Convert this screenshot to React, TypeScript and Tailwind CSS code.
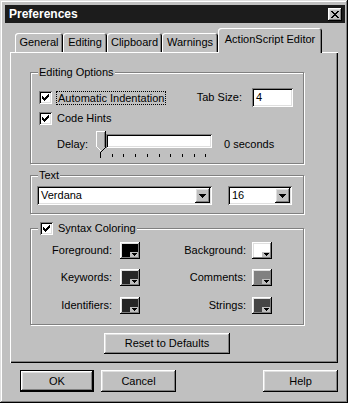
import React from "react";

const raised =
  "shadow-[inset_-1px_-1px_0_#000,inset_1px_1px_0_#fff,inset_-2px_-2px_0_#808080,inset_2px_2px_0_#dfdfdf]";
const sunken =
  "shadow-[inset_1px_1px_0_#808080,inset_-1px_-1px_0_#fff,inset_2px_2px_0_#000,inset_-2px_-2px_0_#dfdfdf]";

function CheckBox() {
  return (
    <div className={`w-[13px] h-[13px] bg-white ${sunken} flex items-center justify-center shrink-0`}>
      <svg width="7" height="7" viewBox="0 0 7 7" shapeRendering="crispEdges">
        <path d="M0 2h1v1h1v1h1v-1h1v-1h1v-1h1v-1h1v3h-1v1h-1v1h-1v1h-1v1h-1v-1h-1v-1h-1v-1h-1z" fill="#000" />
      </svg>
    </div>
  );
}

function Arrow() {
  return (
    <svg width="7" height="4" viewBox="0 0 7 4" shapeRendering="crispEdges">
      <path d="M0 0h7v1h-1v1h-1v1h-1v1h-1v-1h-1v-1h-1v-1h-1z" fill="#000" />
    </svg>
  );
}

function Select({ value, width }: { value: string; width: string }) {
  return (
    <div className={`${width} h-[19px] bg-white ${sunken} flex items-center pl-[4px] pr-[2px]`}>
      <span className="flex-1 leading-none">{value}</span>
      <div className={`w-[15px] h-[15px] bg-[#c0c0c0] ${raised} flex items-center justify-center`}>
        <Arrow />
      </div>
    </div>
  );
}

function Swatch({ color }: { color: string }) {
  return (
    <div className={`relative w-[20px] h-[17px] bg-[#c0c0c0] ${raised} shrink-0`}>
      <div className="absolute left-[2px] top-[2px] right-[2px] bottom-[2px]" style={{ background: color }} />
      <div className="absolute right-[2px] bottom-[2px] w-[8px] h-[5px] bg-[#c0c0c0] flex items-center justify-center">
        <svg width="5" height="3" viewBox="0 0 5 3" shapeRendering="crispEdges">
          <path d="M0 0h5v1h-1v1h-1v1h-1v-1h-1v-1h-1z" fill="#000" />
        </svg>
      </div>
    </div>
  );
}

function Button({ label, width, isDefault }: { label: string; width: string; isDefault?: boolean }) {
  const inner = (
    <div className={`${isDefault ? "w-full h-full" : `${width} h-[22px]`} bg-[#c0c0c0] ${raised} flex items-center justify-center`}>
      {label}
    </div>
  );
  if (isDefault) {
    return <div className={`${width} h-[22px] border border-black`}>{inner}</div>;
  }
  return inner;
}

function Tab({ label, width, active }: { label: string; width: string; active?: boolean }) {
  return (
    <div
      className={`${width} ${
        active ? "h-[25px] -mb-px relative z-10 pb-[3px]" : "h-[19px]"
      } bg-[#c0c0c0] rounded-t-[3px] shadow-[inset_1px_1px_0_#fff,inset_-1px_0_0_#000,inset_-2px_0_0_#808080] flex items-center justify-center`}
    >
      {label}
    </div>
  );
}

function Group({
  legend,
  className,
  children,
}: {
  legend: React.ReactNode;
  className: string;
  children: React.ReactNode;
}) {
  return (
    <div className={`relative w-[274px] border border-[#808080] shadow-[inset_1px_1px_0_#fff,1px_1px_0_#fff] ${className}`}>
      <div className="absolute -top-[8px] left-[7px] px-[1px] bg-[#c0c0c0] flex items-center leading-none h-[14px]">
        {legend}
      </div>
      {children}
    </div>
  );
}

export default function App() {
  const ticks = [0, 1, 2, 3, 4, 5, 6, 7, 8, 9];
  return (
    <div className="w-[350px] h-[406px] bg-white font-['Liberation_Sans',Arial,sans-serif] text-[11px] text-black">
      <div className="w-[348px] h-[403px] bg-[#c0c0c0] shadow-[inset_-1px_-1px_0_#000,inset_1px_1px_0_#dfdfdf,inset_-2px_-2px_0_#808080,inset_2px_2px_0_#fff] pt-[5px] pl-[5px] pr-[3px] flex flex-col">
        {/* Title bar */}
        <div className="h-[18px] bg-[#1c1c1c] flex items-center justify-between pl-[4px] pr-[3px]">
          <span className="text-white font-bold text-[12px] leading-none">Preferences</span>
          <div className={`w-[14px] h-[13px] bg-[#c0c0c0] ${raised} flex items-center justify-center`}>
            <svg width="8" height="7" viewBox="0 0 8 7" shapeRendering="crispEdges">
              <path d="M0 0h2v1h1v1h2v-1h1v-1h2v1h-1v1h-1v1h-1v1h1v1h1v1h1v1h-2v-1h-1v-1h-2v1h-1v1h-2v-1h1v-1h1v-1h1v-1h-1v-1h-1v-1h-1z" fill="#000" />
            </svg>
          </div>
        </div>

        {/* Tabs */}
        <div className="mt-[5px] h-[24px] ml-[10px] flex items-end">
          <Tab label="General" width="w-[48px]" />
          <Tab label="Editing" width="w-[44px]" />
          <Tab label="Clipboard" width="w-[55px]" />
          <Tab label="Warnings" width="w-[56px]" />
          <Tab label="ActionScript Editor" width="w-[104px]" active />
        </div>

        {/* Panel */}
        <div className="ml-[5px] w-[328px] h-[311px] shadow-[inset_1px_1px_0_#fff,inset_-1px_-1px_0_#000,inset_-2px_-2px_0_#808080] pt-[20px] pl-[20px] flex flex-col">
          {/* Editing Options */}
          <Group legend={<span>Editing Options</span>} className="h-[92px] pt-[15px] pl-[8px] pr-[10px]">
            <div className="h-[19px] flex items-center">
              <CheckBox />
              <span className="ml-[4px] border border-dotted border-black px-[1px] leading-[12px]">
                Automatic Indentation
              </span>
              <span className="ml-auto">Tab Size:</span>
              <div className={`ml-[10px] w-[41px] h-[19px] bg-white ${sunken} flex items-center pl-[4px]`}>4</div>
            </div>
            <div className="mt-[1px] h-[20px] flex items-center">
              <CheckBox />
              <span className="ml-[5px]">Code Hints</span>
            </div>
            <div className="mt-[3px] flex items-start">
              <span className="ml-[18px] w-[39px] mt-[5px]">Delay:</span>
              <div className="flex flex-col">
                <div className="flex items-start">
                  <svg width="10" height="21" viewBox="0 0 10 21" shapeRendering="crispEdges">
                    <path d="M0 0h10v16l-5 5l-5-5z" fill="#c0c0c0" />
                    <path d="M0 0h9v1h-8v15h-1z" fill="#fff" />
                    <path d="M9 0h1v16h-1z" fill="#000" />
                    <path d="M8 1h1v15h-1z" fill="#808080" />
                    <path d="M1 16h1v1h1v1h1v1h1v1h-1v-1h-1v-1h-1v-1h-1z" fill="#fff" />
                    <path d="M9 16h1v1h-1v1h-1v1h-1v1h-1v1h-1v-1h1v-1h1v-1h1v-1h1z" fill="#000" />
                  </svg>
                  <div className={`mt-[3px] w-[106px] h-[14px] bg-white ${sunken}`} />
                </div>
                <svg width="116" height="7" viewBox="0 0 116 7" shapeRendering="crispEdges" className="mt-[0px]">
                  {ticks.map((i) => (
                    <rect key={i} x={4 + i * 11.7} y={i === 0 ? 0 : 2} width="1" height={i === 0 ? 6 : 3} fill="#000" />
                  ))}
                </svg>
              </div>
              <span className="ml-[12px] mt-[5px]">0 seconds</span>
            </div>
          </Group>

          {/* Text */}
          <Group legend={<span>Text</span>} className="mt-[11px] h-[39px] pt-[10px] pl-[6px] flex items-start">
            <Select value="Verdana" width="w-[175px]" />
            <div className="ml-[16px]">
              <Select value="16" width="w-[64px]" />
            </div>
          </Group>

          {/* Syntax Coloring */}
          <Group
            legend={
              <>
                <div className="ml-[1px]">
                  <CheckBox />
                </div>
                <span className="ml-[5px]">Syntax Coloring</span>
              </>
            }
            className="mt-[14px] h-[97px] pt-[13px] flex flex-col"
          >
            {[
              ["Foreground:", "#000000", "Background:", "#ffffff"],
              ["Keywords:", "#262626", "Comments:", "#808080"],
              ["Identifiers:", "#262626", "Strings:", "#454545"],
            ].map(([l1, c1, l2, c2], i) => (
              <div key={l1} className={`h-[17px] flex items-center ${i === 1 ? "mt-[10px]" : i === 2 ? "mt-[11px]" : ""}`}>
                <span className="w-[81px] text-right">{l1}</span>
                <div className="ml-[8px]">
                  <Swatch color={c1} />
                </div>
                <span className="w-[106px] text-right">{l2}</span>
                <div className="ml-[6px]">
                  <Swatch color={c2} />
                </div>
              </div>
            ))}
          </Group>

          <div className="w-[274px] mt-[8px] flex justify-center">
            <div className={`w-[126px] h-[21px] bg-[#c0c0c0] ${raised} flex items-center justify-center`}>
              Reset to Defaults
            </div>
          </div>
        </div>

        {/* Bottom buttons */}
        <div className="mt-[7px] flex items-center">
          <div className="ml-[15px]">
            <Button label="OK" width="w-[74px]" isDefault />
          </div>
          <div className="ml-[7px]">
            <Button label="Cancel" width="w-[75px]" />
          </div>
          <div className="ml-[87px]">
            <Button label="Help" width="w-[75px]" />
          </div>
        </div>
      </div>
    </div>
  );
}
